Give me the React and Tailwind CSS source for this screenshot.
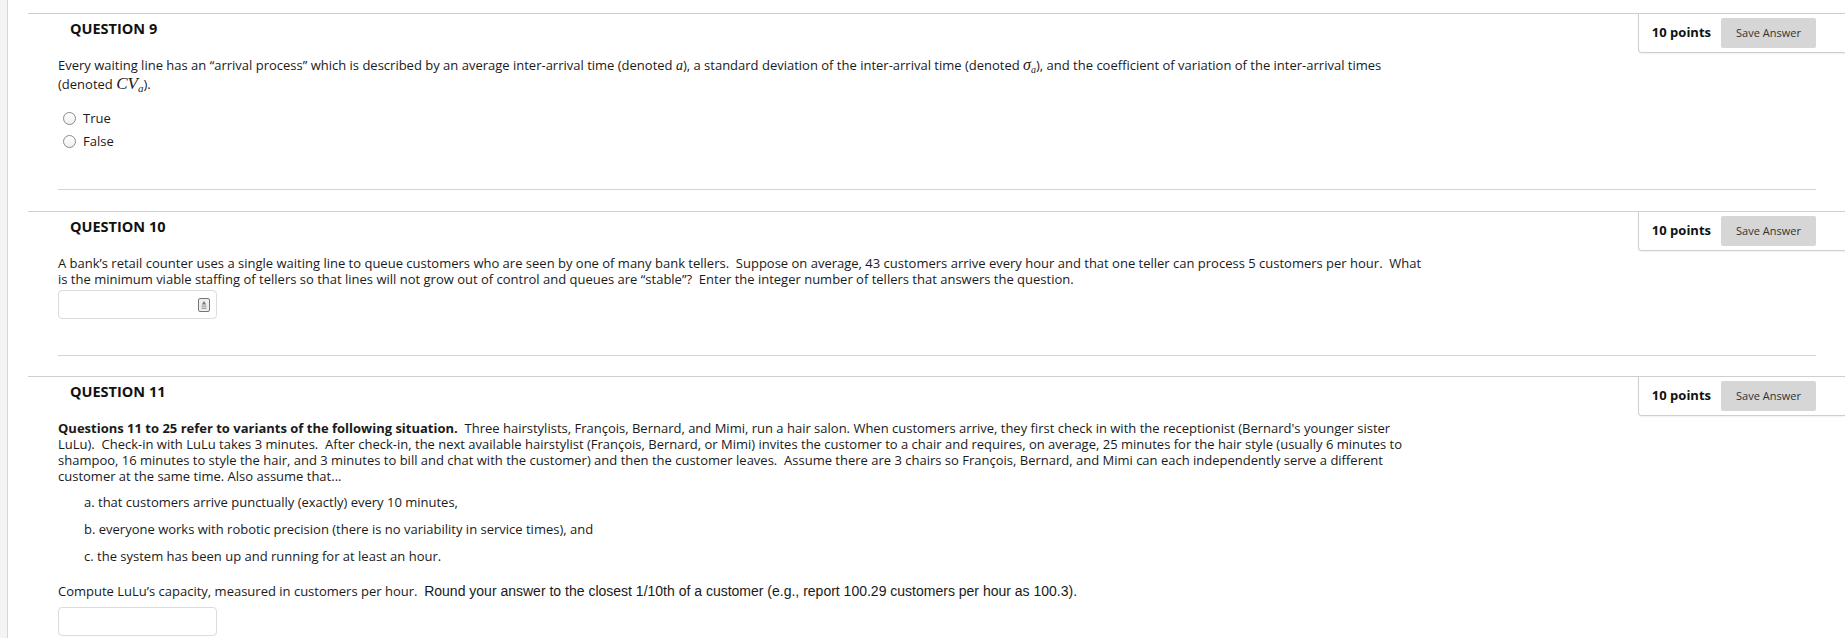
import React from 'react'

const SP = '\u00a0 '

function PointsBox() {
    return (
        <div className="flex items-center h-[40px] -mt-px border-l border-b border-t border-[#cfcfcf] rounded-bl-[4px] bg-white pl-[13px] pr-[29px] shadow-[0_1px_2px_rgba(0,0,0,0.06)]">
            <span className="text-[13px] font-bold text-[#111]">10 points</span>
            <button className="ml-[10px] w-[95px] h-[30px] bg-[#d6d6d6] text-[11px] text-[#333] rounded-[2px]">Save Answer</button>
        </div>
    )
}

function QuestionHeader({ n }) {
    return (
        <div className="flex justify-between items-start">
            <h3 className="pl-[42px] pt-[5px] text-[14.5px] leading-[20px] font-bold text-[#111]">QUESTION {n}</h3>
            <PointsBox />
        </div>
    )
}

function Radio({ label }) {
    return (
        <label className="flex items-center h-[23px]">
            <span className="ml-[5px] w-[13px] h-[13px] rounded-full border border-[#8a8a8a] bg-gradient-to-b from-white to-[#f0f0f0]" />
            <span className="ml-[7px]">{label}</span>
        </label>
    )
}

function KeyIcon() {
    return (
        <svg width="12" height="14" viewBox="0 0 12 14">
            <rect x="0.5" y="0.5" width="11" height="13" rx="1.5" fill="#eee" stroke="#777" />
            <path d="M6 3 L8.2 6.5 H3.8 Z" fill="#777" />
            <rect x="3.5" y="7.5" width="5" height="1.2" fill="#999" />
            <rect x="3.5" y="9.7" width="5" height="1.2" fill="#999" />
        </svg>
    )
}

function AnswerInput({ icon }) {
    return (
        <div className="flex items-center justify-end w-[159px] h-[29px] border border-[#dcdcdc] rounded-[4px] bg-white pr-[6px]">
            {icon && <KeyIcon />}
        </div>
    )
}

export default function App() {
    return (
        <div className="flex min-h-screen bg-white text-[#1a1a1a] font-['Open_Sans',sans-serif]">
            <div className="w-[8px] shrink-0 bg-[#f4f4f4] border-r border-[#d6d6d6]" />
            <div className="flex-1 pl-[20px] pt-[13px]">
                {/* Question 9 */}
                <section className="border-t border-[#cfcfcf]">
                    <QuestionHeader n={9} />
                    <div className="pl-[30px] pr-[29px]">
                        <p className="mt-[4px] w-[1370px] text-[13px] leading-[16px]">
                            Every waiting line has an “arrival process” which is described by an average inter-arrival time (denoted <i className="font-['Liberation_Serif'] text-[14px]">a</i>), a standard deviation of the inter-arrival time (denoted <span className="font-['Liberation_Serif'] italic text-[16px]">σ<sub className="text-[10px]">a</sub></span>), and the coefficient of variation of the inter-arrival times (denoted <span className="font-['Liberation_Serif'] italic text-[17px] leading-[20px]">CV<sub className="text-[11px]">a</sub></span>).
                        </p>
                        <div className="mt-[13px] text-[13px]">
                            <Radio label="True" />
                            <Radio label="False" />
                        </div>
                        <div className="mt-[36px] border-t border-[#d4d4d4]" />
                    </div>
                </section>

                {/* Question 10 */}
                <section className="mt-[21px] border-t border-[#cfcfcf]">
                    <QuestionHeader n={10} />
                    <div className="pl-[30px] pr-[29px]">
                        <p className="mt-[4px] w-[1370px] text-[13px] leading-[16px]">
                            A bank’s retail counter uses a single waiting line to queue customers who are seen by one of many bank tellers.{SP}Suppose on average, 43 customers arrive every hour and that one teller can process 5 customers per hour.{SP}What is the minimum viable staffing of tellers so that lines will not grow out of control and queues are “stable”?{SP}Enter the integer number of tellers that answers the question.
                        </p>
                        <div className="mt-[3px]">
                            <AnswerInput icon />
                        </div>
                        <div className="mt-[36px] border-t border-[#d4d4d4]" />
                    </div>
                </section>

                {/* Question 11 */}
                <section className="mt-[20px] border-t border-[#cfcfcf]">
                    <QuestionHeader n={11} />
                    <div className="pl-[30px] pr-[29px] text-[13px] leading-[16px]">
                        <p className="mt-[4px] w-[1370px]">
                            <b>Questions 11 to 25 refer to variants of the following situation.</b>{SP}Three hairstylists, François, Bernard, and Mimi, run a hair salon. When customers arrive, they first check in with the receptionist (Bernard's younger sister LuLu).{SP}Check-in with LuLu takes 3 minutes.{SP}After check-in, the next available hairstylist (François, Bernard, or Mimi) invites the customer to a chair and requires, on average, 25 minutes for the hair style (usually 6 minutes to shampoo, 16 minutes to style the hair, and 3 minutes to bill and chat with the customer) and then the customer leaves.{SP}Assume there are 3 chairs so François, Bernard, and Mimi can each independently serve a different customer at the same time. Also assume that...
                        </p>
                        <div className="mt-[10px] pl-[26px] flex flex-col gap-[11px]">
                            <p>a. that customers arrive punctually (exactly) every 10 minutes,</p>
                            <p>b. everyone works with robotic precision (there is no variability in service times), and</p>
                            <p>c. the system has been up and running for at least an hour.</p>
                        </div>
                        <p className="mt-[19px]">
                            Compute LuLu’s capacity, measured in customers per hour.{SP}<span className="font-['Liberation_Sans'] text-[14px]">Round your answer to the closest 1/10th of a customer (e.g., report 100.29 customers per hour as 100.3).</span>
                        </p>
                        <div className="mt-[8px]">
                            <AnswerInput />
                        </div>
                    </div>
                </section>
            </div>
        </div>
    )
}
